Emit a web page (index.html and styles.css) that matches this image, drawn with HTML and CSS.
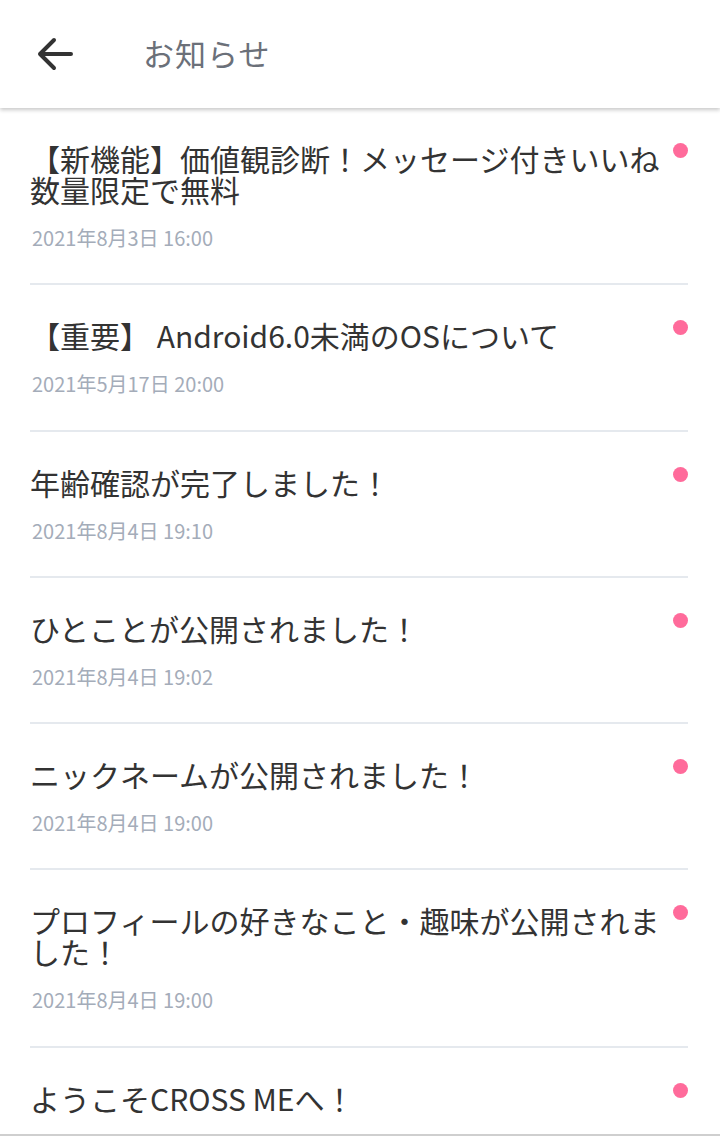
FILE: index.html
```html
<!DOCTYPE html>
<html lang="ja">
<head>
  <meta charset="UTF-8" />
  <meta name="viewport" content="width=device-width, initial-scale=1" />
  <title>お知らせ</title>
  <link rel="stylesheet" href="styles.css">
</head>
<body>
  <div class="screen">
    <header class="app-bar">
      <button class="back-btn" aria-label="戻る">
        <svg width="40" height="40" viewBox="0 0 40 40">
          <path d="M36 20H5M19 6L5 20l14 14" fill="none" stroke="#333" stroke-width="4" stroke-linecap="round" stroke-linejoin="round"/>
        </svg>
      </button>
      <h1 class="app-title">お知らせ</h1>
    </header>

    <ul class="notice-list">
      <li class="notice">
        <div class="notice-body">
          <p class="notice-title">【新機能】価値観診断！メッセージ付きいいね数量限定で無料</p>
          <p class="notice-date">2021年8月3日 16:00</p>
        </div>
        <span class="unread-dot"></span>
      </li>
      <li class="notice">
        <div class="notice-body">
          <p class="notice-title">【重要】 Android6.0未満のOSについて</p>
          <p class="notice-date">2021年5月17日 20:00</p>
        </div>
        <span class="unread-dot"></span>
      </li>
      <li class="notice">
        <div class="notice-body">
          <p class="notice-title">年齢確認が完了しました！</p>
          <p class="notice-date">2021年8月4日 19:10</p>
        </div>
        <span class="unread-dot"></span>
      </li>
      <li class="notice">
        <div class="notice-body">
          <p class="notice-title">ひとことが公開されました！</p>
          <p class="notice-date">2021年8月4日 19:02</p>
        </div>
        <span class="unread-dot"></span>
      </li>
      <li class="notice">
        <div class="notice-body">
          <p class="notice-title">ニックネームが公開されました！</p>
          <p class="notice-date">2021年8月4日 19:00</p>
        </div>
        <span class="unread-dot"></span>
      </li>
      <li class="notice">
        <div class="notice-body">
          <p class="notice-title">プロフィールの好きなこと・趣味が公開されました！</p>
          <p class="notice-date">2021年8月4日 19:00</p>
        </div>
        <span class="unread-dot"></span>
      </li>
      <li class="notice">
        <div class="notice-body">
          <p class="notice-title">ようこそCROSS MEへ！</p>
        </div>
        <span class="unread-dot"></span>
      </li>
    </ul>

    <div class="bottom-edge"></div>
  </div>
</body>
</html>
```

FILE: styles.css
```css
body {
  margin: 0;
  background: #fff;
  font-family: "Noto Sans CJK JP", "Noto Sans", sans-serif;
  color: #333;
}
.screen {
  height: 1136px;
  display: flex;
  flex-direction: column;
  overflow: hidden;
}
.app-bar {
  flex: none;
  height: 108px;
  display: flex;
  align-items: center;
  padding-left: 35px;
  background: #fff;
  box-shadow: 0 2px 4px rgba(0,0,0,0.22);
  position: relative;
  z-index: 1;
}
.back-btn {
  width: 40px;
  height: 40px;
  padding: 0;
  border: none;
  background: none;
  display: flex;
}
.app-title {
  margin: 0 0 4px 68px;
  font-size: 31px;
  font-weight: 400;
  letter-spacing: 1px;
  color: #6b7079;
}
.notice-list {
  flex: 1;
  list-style: none;
  margin: 0;
  padding: 0 32px 0 30px;
  overflow: hidden;
}
.notice {
  display: flex;
  align-items: flex-start;
  gap: 8px;
  padding: 35px 0 35.3px;
  border-bottom: 2px solid #e5e9ee;
}
.notice-body {
  flex: 1;
}
.notice-title {
  margin: 0;
  font-size: 30px;
  line-height: 31px;
  color: #333;
}
.notice-date {
  margin: 23px 0 0 2px;
  font-size: 20px;
  line-height: 20px;
  color: #a4acb9;
}
.unread-dot {
  flex: none;
  width: 15px;
  height: 15px;
  margin-top: 0;
  border-radius: 50%;
  background: #ff6b9b;
}
.bottom-edge {
  flex: none;
  height: 2px;
  background: #cfcfcf;
}
```
